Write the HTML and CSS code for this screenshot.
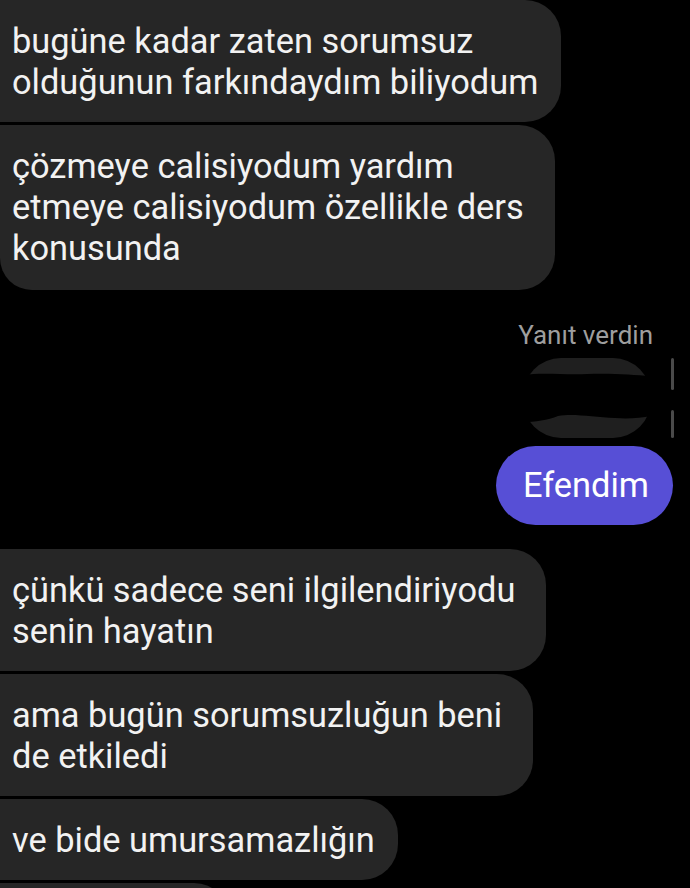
FILE: index.html
```html
<!DOCTYPE html>
<html lang="tr">
<head>
<meta charset="utf-8">
<link rel="stylesheet" href="styles.css">
</head>
<body>
<main class="chat">
  <div class="msg in first">bugüne kadar zaten sorumsuz<br>olduğunun farkındaydım biliyodum</div>
  <div class="msg in last wide">çözmeye calisiyodum yardım<br>etmeye calisiyodum özellikle ders<br>konusunda</div>

  <div class="reply">
    <div class="reply-label">Yanıt verdin</div>
    <div class="reply-row">
      <svg class="quote" width="128" height="80" viewBox="0 0 128 80">
        <rect x="0" y="0" width="128" height="80" rx="38" fill="#1f1f1f"/>
        <path d="M0 17 C20 14 40 17 64 16 C90 15 110 17 128 18 L128 58 C118 60 105 61 92 60 C70 59 50 55 35 58 C25 62 12 64 0 64 Z" fill="#000"/>
      </svg>
      <div class="bar">
        <span class="bar-seg top"></span>
        <span class="bar-seg bottom"></span>
      </div>
    </div>
  </div>

  <div class="msg out">Efendim</div>

  <div class="msg in first group2 wide">çünkü sadece seni ilgilendiriyodu<br>senin hayatın</div>
  <div class="msg in wide">ama bugün sorumsuzluğun beni<br>de etkiledi</div>
  <div class="msg in">ve bide umursamazlığın</div>
  <div class="msg in stub">&nbsp;</div>
</main>
</body>
</html>
```

FILE: styles.css
```css
html, body {
  margin: 0;
  padding: 0;
  background: #000;
  overflow: hidden;
}

.chat {
  display: flex;
  flex-direction: column;
  align-items: flex-start;
  gap: 3px;
  font-family: Roboto, "Noto Sans", sans-serif;
  color: #f2f2f2;
}

.msg {
  font-size: 34.4px;
  line-height: 41px;
  white-space: nowrap;
  padding: 21px 23px 19px 12px;
  background: #262626;
  border-radius: 0 36px 36px 0;
}

.msg.in.first {
  border-top-left-radius: 0;
}

.msg.in.last {
  border-bottom-left-radius: 32px;
  padding-bottom: 21px;
}

.msg.wide {
  padding-right: 31px;
}

.msg.group2 {
  margin-top: 21px;
  border-top-left-radius: 32px;
}

.reply {
  align-self: stretch;
  display: flex;
  flex-direction: column;
  align-items: flex-end;
  padding-right: 16px;
  margin-top: 27px;
}

.reply-label {
  font-size: 26px;
  line-height: 30px;
  color: #9e9e9e;
  margin-right: 21px;
}

.reply-row {
  display: flex;
  align-items: stretch;
  gap: 20px;
  margin-top: 8px;
}

.quote {
  display: block;
}

.bar {
  width: 3px;
  display: flex;
  flex-direction: column;
  justify-content: space-between;
}

.bar-seg {
  display: block;
  width: 3px;
  background: #4a4a4a;
  border-radius: 2px;
}

.bar-seg.top { height: 32px; }
.bar-seg.bottom { height: 28px; }

.msg.out {
  align-self: flex-end;
  margin-right: 17px;
  margin-top: 5px;
  background: #574fd6;
  color: #fff;
  padding: 19px 24px 19px 27px;
  border-radius: 40px;
}

.msg.stub {
  width: 195px;
}
```
